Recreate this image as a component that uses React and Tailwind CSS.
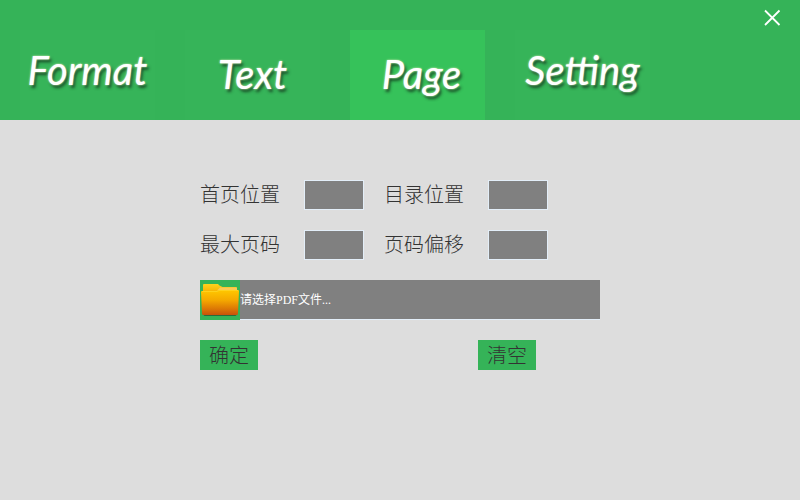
const tabs = ['Format', 'Text', 'Page', 'Setting'];

const textFont = "font-['Liberation_Serif','Noto_Sans_CJK_SC',sans-serif]";

const placements = {
  Format: 'pt-4',
  Text: 'pt-5',
  Page: 'pt-5 pl-2',
  Setting: 'pt-4',
};

function Tab({ name, active }) {
  return (
    <button
      type="button"
      role="tab"
      aria-selected={active}
      className={`flex h-[90px] w-[135px] items-start justify-center text-[40px] leading-[48px] font-normal italic text-white font-['Lato',cursive] [text-shadow:0_0_2px_#f4f7c8,2px_3px_3px_rgba(20,60,30,0.85)] ${placements[name]} ${active ? 'bg-[#36c25a]' : 'bg-[#36b459]'}`}
    >
      {name}
    </button>
  );
}

function Field({ id, label }) {
  return (
    <div className="flex h-[30px] items-center">
      <label htmlFor={id} className="w-[104px] text-[20px] leading-[32px] font-light">
        {label}
      </label>
      <input
        id={id}
        type="text"
        className="h-[30px] w-[60px] border border-[#e3eef8] bg-[#808080] px-1 text-white outline-none"
      />
    </div>
  );
}

function FolderIcon() {
  return (
    <svg viewBox="0 0 40 40" className="size-10" aria-hidden="true">
      <defs>
        <linearGradient id="front" x1="0" y1="0" x2="0" y2="1">
          <stop offset="0" stopColor="#ffc800" />
          <stop offset="0.4" stopColor="#f5a900" />
          <stop offset="0.75" stopColor="#dc7805" />
          <stop offset="1" stopColor="#c8520a" />
        </linearGradient>
        <linearGradient id="back" x1="0" y1="0" x2="0" y2="1">
          <stop offset="0" stopColor="#ffd21c" />
          <stop offset="1" stopColor="#f5ae00" />
        </linearGradient>
      </defs>
      <path d="M3 34.5h34l-1.5 1.5H4.500z" fill="#2a6b3a" />
      <path d="M3 5q0-1 1-1h14l1.500 1.500l3 1.500h13.500q1 0 1 1v5H3z" fill="url(#back)" />
      <path d="M20 7.500h16q1 0 1 1v2H17z" fill="#f8cf70" opacity="0.75" />
      <path d="M2 11h15l2-1h19q1 0 1 1l-1 22q0 2-1 2H3q-1 0-1-2L1 12q0-1 1-1z" fill="url(#front)" />
      <path d="M2 11.500h15l2-1h19" fill="none" stroke="#ffdc30" strokeWidth="0.6" />
    </svg>
  );
}

function ActionButton({ children }) {
  return (
    <button type="button" className="h-[30px] w-[58px] bg-[#35b358] text-[20px] leading-[32px] font-light">
      {children}
    </button>
  );
}

export default function App() {
  return (
    <div className={`min-h-screen bg-[#dddddd] text-[#333333] ${textFont}`}>
      <header className="flex items-start justify-between bg-[#35b358] pl-5">
        <div role="tablist" className="flex gap-[30px] pt-[30px]">
          {tabs.map((name) => (
            <Tab key={name} name={name} active={name === 'Page'} />
          ))}
        </div>
        <button type="button" aria-label="Close" className="p-2 mr-[10px]">
          <svg viewBox="0 0 20 20" className="size-5" fill="none" stroke="#ffffff" strokeWidth="1.8" aria-hidden="true">
            <path d="M3 2.5l14.500 14.500M17.500 2.500l-14.500 14.500" />
          </svg>
        </button>
      </header>

      <main>
        <form className="mx-auto flex w-[400px] flex-col gap-5 pt-[60px]" onSubmit={(e) => e.preventDefault()}>
          <div className="flex gap-5">
            <Field id="first" label="首页位置" />
            <Field id="toc" label="目录位置" />
          </div>
          <div className="flex gap-5">
            <Field id="max" label="最大页码" />
            <Field id="offset" label="页码偏移" />
          </div>
          <div className="flex h-10">
            <button type="button" aria-label="选择文件" className="bg-[#35b358]">
              <FolderIcon />
            </button>
            <input
              type="text"
              aria-label="PDF文件"
              placeholder="请选择PDF文件..."
              className="min-w-0 grow border-b border-[#e3eef8] bg-[#808080] pt-px text-[12px] text-white outline-none placeholder:text-white"
            />
          </div>
          <div className="flex gap-[220px]">
            <ActionButton>确定</ActionButton>
            <ActionButton>清空</ActionButton>
          </div>
        </form>
      </main>
    </div>
  );
}
